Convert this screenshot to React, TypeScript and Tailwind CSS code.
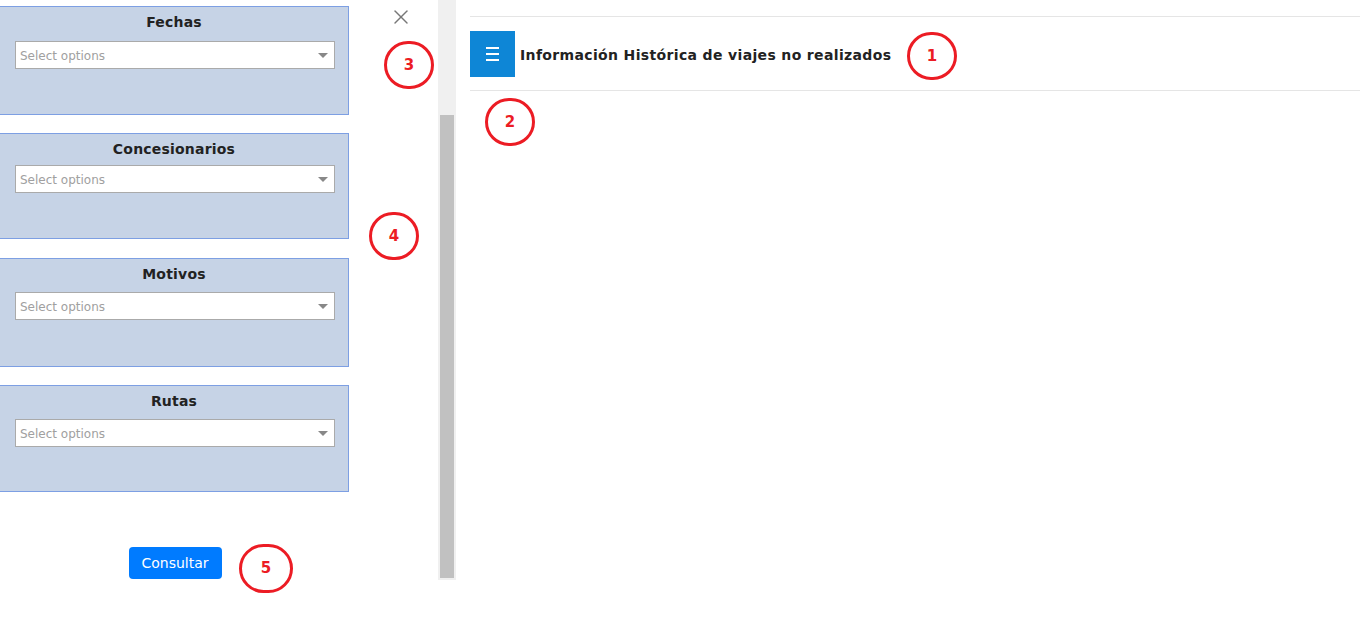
import { X } from 'lucide-react';

const filters = [
  { title: 'Fechas', box: 'h-[109px]', sel: 'mt-[10px]' },
  { title: 'Concesionarios', box: 'h-[106px] mt-[18px]', sel: 'mt-[7px]' },
  { title: 'Motivos', box: 'h-[109px] mt-[19px]', sel: 'mt-[9px]' },
  { title: 'Rutas', box: 'h-[107px] mt-[18px]', sel: 'mt-[9px]' },
];

function Mark({ n, className }: { n: string; className: string }) {
  return (
    <div
      className={`absolute w-[50px] h-[48px] rounded-full border-[3px] border-[#ec1c24] flex items-center justify-center text-[15px] font-bold text-[#ec1c24] ${className}`}
    >
      {n}
    </div>
  );
}

function FilterCard({ title, box, sel }: { title: string; box: string; sel: string }) {
  return (
    <div className={`${box} w-[350px] -ml-px bg-[#c6d3e6] border border-[#7d9fe3] pt-[6px]`}>
      <h3 className="text-center text-[14px] tracking-[0.2px] font-bold text-[#222] leading-[18px]">{title}</h3>
      <div className={`${sel} ml-[15px] w-[320px] h-[28px] bg-white border border-[#aaa] flex items-center justify-between pl-[4px] pr-[6px]`}>
        <span className="text-[12px] text-[#a0a0a0] mt-px">Select options</span>
        <span className="w-0 h-0 border-l-[5px] border-r-[5px] border-t-[5px] border-l-transparent border-r-transparent border-t-[#888]"></span>
      </div>
    </div>
  );
}

export default function App() {
  return (
    <div className="relative w-[1360px] h-[636px] bg-white overflow-hidden font-['DejaVu_Sans',Verdana,sans-serif]">
      <div className="flex">
        <aside className="flex w-[438px]">
          <div className="w-[350px] pt-[6px] flex flex-col">
            {filters.map((f) => (
              <FilterCard key={f.title} title={f.title} box={f.box} sel={f.sel} />
            ))}
            <div className="flex justify-center mt-[55px]">
              <button className="h-[32px] w-[93px] rounded-[4px] bg-[#007bff] text-white text-[14px]">
                Consultar
              </button>
            </div>
          </div>
          <div className="flex-1 flex justify-center pt-[5px] pl-[14px]">
            <X className="w-[24px] h-[24px] text-[#777]" strokeWidth={1.4} />
          </div>
        </aside>

        <div className="w-[18px] h-[580px] bg-[#f0f0f0] px-[2px] pt-[115px]">
          <div className="h-[463px] bg-[#c1c1c1]"></div>
        </div>

        <main className="flex-1 ml-[14px] pt-[16px]">
          <div className="border-t border-b border-[#e5e5e5] pt-[14px] pb-[13px] flex items-center">
            <div className="w-[45px] h-[46px] bg-[#0e86d6] flex flex-col items-center justify-center gap-[4px]">
              <span className="block w-[13px] h-[2px] bg-white"></span>
              <span className="block w-[13px] h-[2px] bg-white"></span>
              <span className="block w-[13px] h-[2px] bg-white"></span>
            </div>
            <h1 className="ml-[5px] mt-[2px] text-[14px] tracking-[0.35px] font-bold text-[#222]">
              Información Histórica de viajes no realizados
            </h1>
          </div>
        </main>
      </div>

      <Mark n="1" className="left-[907px] top-[32px]" />
      <Mark n="2" className="left-[485px] top-[98px]" />
      <Mark n="3" className="left-[384px] top-[41px] w-[47px] h-[46px]" />
      <Mark n="4" className="left-[369px] top-[212px]" />
      <Mark n="5" className="left-[239px] top-[544px] w-[54px] h-[49px]" />
    </div>
  );
}
